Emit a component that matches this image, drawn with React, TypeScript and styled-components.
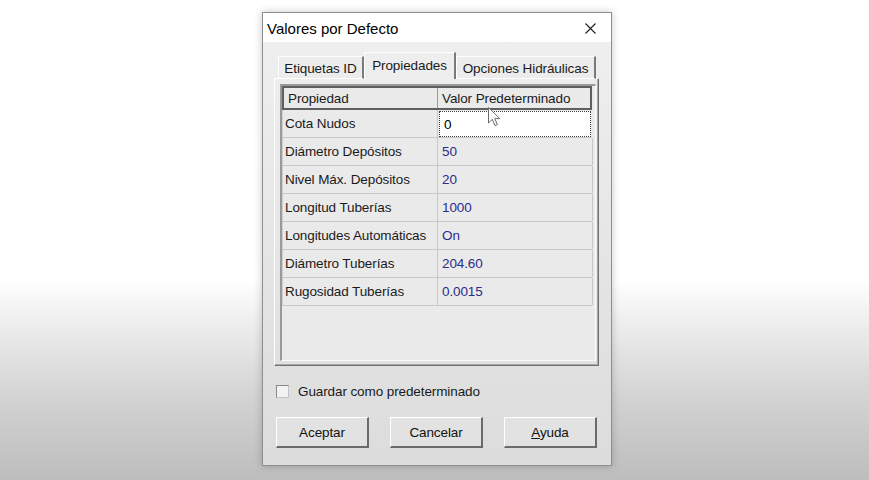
import React from 'react'
import styled, { createGlobalStyle } from 'styled-components'

const GlobalStyle = createGlobalStyle`
  html, body {
    margin: 0;
    padding: 0;
  }
  body {
    width: 869px;
    height: 480px;
    overflow: hidden;
    background: linear-gradient(
      to bottom,
      #ffffff 0,
      #ffffff 280px,
      #ebebeb 330px,
      #d2d2d2 400px,
      #bdbdbd 480px
    );
    font-family: "Liberation Sans", Arial, sans-serif;
  }
`

type Row = { name: string; value: string; editing?: boolean }

const rows: Row[] = [
  { name: 'Cota Nudos', value: '0', editing: true },
  { name: 'Diámetro Depósitos', value: '50' },
  { name: 'Nivel Máx. Depósitos', value: '20' },
  { name: 'Longitud Tuberías', value: '1000' },
  { name: 'Longitudes Automáticas', value: 'On' },
  { name: 'Diámetro Tuberías', value: '204.60' },
  { name: 'Rugosidad Tuberías', value: '0.0015' },
]

const tabs = [
  { label: 'Etiquetas ID', width: 86 },
  { label: 'Propiedades', width: 92, active: true },
  { label: 'Opciones Hidráulicas', width: 140 },
]

const App: React.FC = () => {
  return (
    <Page>
      <GlobalStyle />
      <Dialog>
        <TitleBar>
          <span>Valores por Defecto</span>
          <svg width="11" height="11" viewBox="0 0 11 11">
            <path d="M0.5 0.5 L10.5 10.5 M10.5 0.5 L0.5 10.5" stroke="#1e1e1e" strokeWidth="1.1" />
          </svg>
        </TitleBar>
        <Body>
          <TabRow>
            {tabs.map((t) => (
              <Tab key={t.label} $w={t.width} $active={t.active}>
                {t.label}
              </Tab>
            ))}
          </TabRow>
          <Panel>
            <GridBox>
              <HeaderRow>
                <HeaderCell>Propiedad</HeaderCell>
                <HeaderCell $last>Valor Predeterminado</HeaderCell>
              </HeaderRow>
              {rows.map((r) => (
                <DataRow key={r.name}>
                  <NameCell>{r.name}</NameCell>
                  {r.editing ? <EditCell>{r.value}</EditCell> : <ValueCell>{r.value}</ValueCell>}
                </DataRow>
              ))}
              <Pointer width="14" height="20" viewBox="0 0 14 20">
                <path
                  d="M0.5 0.5 L0.5 16 L4.3 12.4 L7 18.6 L9.4 17.6 L6.8 11.6 L11.8 11.6 Z"
                  fill="#ffffff"
                  stroke="#6a6a6a"
                  strokeWidth="1"
                  strokeLinejoin="round"
                />
              </Pointer>
            </GridBox>
          </Panel>
          <CheckRow>
            <CheckBox />
            <span>Guardar como predeterminado</span>
          </CheckRow>
          <ButtonRow>
            <Button>Aceptar</Button>
            <Button>Cancelar</Button>
            <Button>
              <u>A</u>yuda
            </Button>
          </ButtonRow>
        </Body>
      </Dialog>
    </Page>
  )
}

export default App

const Page = styled.div`
  height: 480px;
  box-sizing: border-box;
  padding: 12px 0 0 262px;
`

const Dialog = styled.div`
  width: 350px;
  height: 454px;
  box-sizing: border-box;
  border: 1px solid #8f8f8f;
  display: flex;
  flex-direction: column;
  background: linear-gradient(to bottom, #f0f0f0, #dcdcdc);
  box-shadow: 0 0 8px rgba(0, 0, 0, 0.22);
`

const TitleBar = styled.div`
  height: 29px;
  flex-shrink: 0;
  background: #ffffff;
  display: flex;
  align-items: center;
  justify-content: space-between;
  padding: 1px 15px 0 4px;
  box-sizing: border-box;
  font-size: 15px;
  color: #000;
`

const Body = styled.div`
  flex: 1;
  display: flex;
  flex-direction: column;
  padding: 11px 12px 0 11px;
  font-size: 13.5px;
  letter-spacing: -0.1px;
  color: #1a1a1a;
`

const TabRow = styled.div`
  display: flex;
  align-items: flex-end;
  height: 26px;
  padding-left: 4px;
  position: relative;
  z-index: 1;
  margin-bottom: -1px;
`

const Tab = styled.div<{ $w: number; $active?: boolean }>`
  width: ${({ $w }) => $w}px;
  height: ${({ $active }) => ($active ? 27 : 23)}px;
  box-sizing: border-box;
  display: flex;
  align-items: center;
  justify-content: center;
  padding-top: ${({ $active }) => ($active ? 0 : 2)}px;
  padding-bottom: ${({ $active }) => ($active ? 2 : 0)}px;
  border-top: 1px solid #ffffff;
  border-left: 1px solid #ffffff;
  border-right: 2px solid #7a7a7a;
  background: ${({ $active }) => ($active ? '#eeeeee' : '#ececec')};
  border-bottom: ${({ $active }) => ($active ? 'none' : '1px solid #ffffff')};
`

const Panel = styled.div`
  height: 288px;
  box-sizing: border-box;
  display: flex;
  border-top: 1px solid #ffffff;
  border-left: 1px solid #ffffff;
  border-right: 1px solid #6f6f6f;
  border-bottom: 1px solid #6f6f6f;
  box-shadow: inset -1px -1px 0 #a9a9a9;
  padding: 5px 2px 4px 5px;
`

const GridBox = styled.div`
  flex: 1;
  position: relative;
  border-top: 2px solid #9a9a9a;
  border-left: 2px solid #9a9a9a;
  border-right: 1px solid #fbfbfb;
  border-bottom: 1px solid #fbfbfb;
  background: #eaeaea;
`

const HeaderRow = styled.div`
  display: grid;
  grid-template-columns: 154px 156px;
  height: 24px;
  box-sizing: border-box;
  border: 2px solid #5f5f5f;
  width: 310px;
`

const HeaderCell = styled.div<{ $last?: boolean }>`
  display: flex;
  align-items: center;
  padding-left: 4px;
  border-right: ${({ $last }) => ($last ? 'none' : '1px solid #9c9c9c')};
`

const DataRow = styled.div`
  display: grid;
  grid-template-columns: 155px 155px;
  height: 28px;
  width: 310px;
  box-sizing: border-box;
  border-bottom: 1px solid #c8c8c8;
  border-left: 1px solid #cfcfcf;
`

const NameCell = styled.div`
  display: flex;
  align-items: center;
  padding-left: 2px;
  border-right: 1px solid #c8c8c8;
  white-space: nowrap;
`

const ValueCell = styled.div`
  display: flex;
  align-items: center;
  padding-left: 4px;
  color: #2c2c8c;
  border-right: 1px solid #c8c8c8;
`

const EditCell = styled.div`
  display: flex;
  align-items: center;
  padding-left: 4px;
  margin: 1px 2px 0 1px;
  background: #ffffff;
  border: 1px dotted #3a3a3a;
  color: #000;
`

const Pointer = styled.svg`
  position: absolute;
  left: 206px;
  top: 21px;
`

const CheckRow = styled.div`
  display: flex;
  align-items: center;
  gap: 9px;
  margin: 17px 0 0 2px;
  height: 16px;
`

const CheckBox = styled.div`
  width: 13px;
  height: 13px;
  box-sizing: border-box;
  border: 1px solid #8a8a8a;
  border-right-color: #c4c4c4;
  border-bottom-color: #c4c4c4;
  background: #f2f2f2;
`

const ButtonRow = styled.div`
  display: flex;
  justify-content: space-between;
  margin: 18px 2px 0 2px;
`

const Button = styled.button`
  width: 93px;
  height: 31px;
  box-sizing: border-box;
  padding: 0;
  border-top: 1px solid #ffffff;
  border-left: 1px solid #ffffff;
  border-right: 2px solid #6a6a6a;
  border-bottom: 2px solid #6a6a6a;
  background: #e2e2e2;
  font-family: "Liberation Sans", Arial, sans-serif;
  font-size: 13.5px;
  letter-spacing: -0.1px;
  color: #111;
`
